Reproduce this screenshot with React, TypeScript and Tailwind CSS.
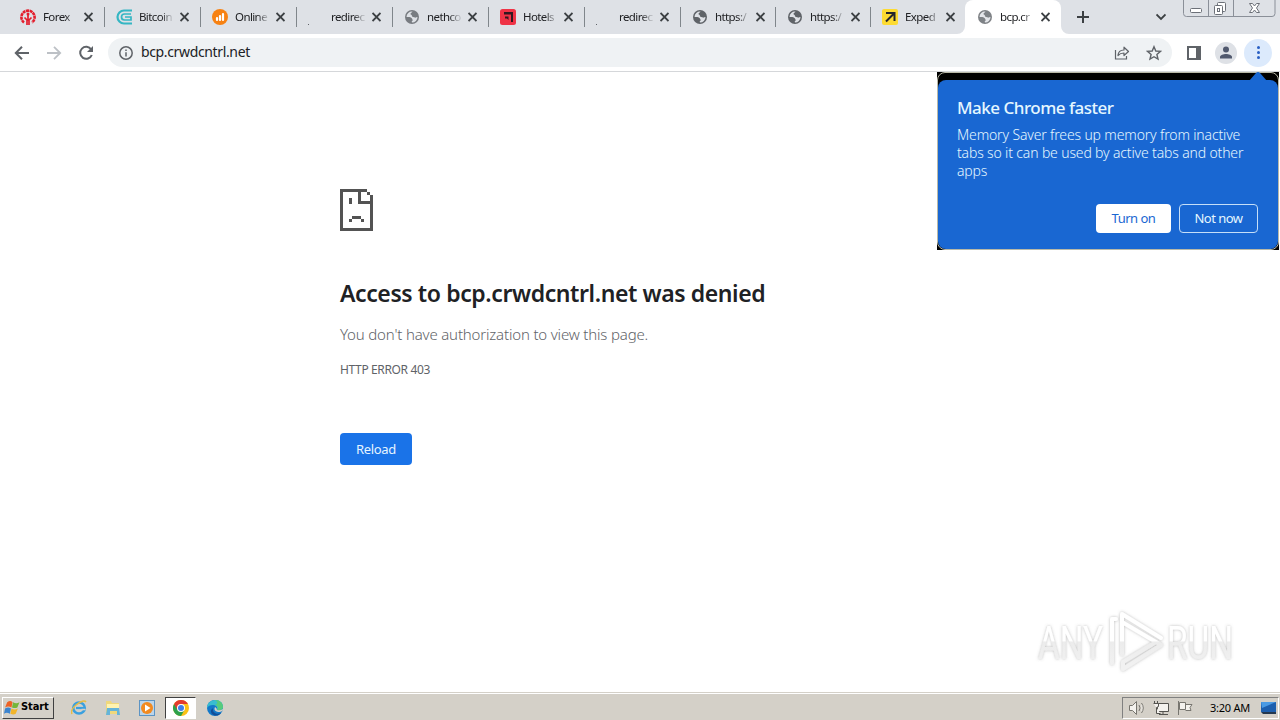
import type { ReactNode } from "react";

type IconName = "forex" | "bitcoin" | "online" | "blank" | "globe" | "hotels" | "expedia";

interface TabInfo {
  title: string;
  icon: IconName;
  width: string;
  faded?: boolean;
}

const TABS: TabInfo[] = [
  { title: "Forex", icon: "forex", width: "w-24" },
  { title: "Bitcoin", icon: "bitcoin", width: "w-24" },
  { title: "Online", icon: "online", width: "w-24" },
  { title: "redirec", icon: "blank", width: "w-24" },
  { title: "nethco", icon: "globe", width: "w-24", faded: true },
  { title: "Hotels", icon: "hotels", width: "w-24" },
  { title: "redirec", icon: "blank", width: "w-24" },
  { title: "https:/", icon: "globe", width: "w-[95px]" },
  { title: "https:/", icon: "globe", width: "w-[95px]" },
  { title: "Exped", icon: "expedia", width: "w-[95px]" },
];

export default function App() {
  return (
    <div className="flex h-[720px] w-[1280px] flex-col overflow-hidden bg-white font-['Noto_Sans','Open_Sans',sans-serif] text-[#202124]">
      <TabStrip />
      <Toolbar />
      <div className="relative min-h-0 flex-1">
        <ErrorPage />
        <MemorySaver />
        <Watermark />
      </div>
      <Taskbar />
    </div>
  );
}

/* ── Tab strip ───────────────────────────────────────────── */

function TabStrip() {
  return (
    <div className="relative flex h-[34px] shrink-0 bg-[#dee1e6] pl-2">
      {TABS.map((tab, i) => (
        <div key={i} className={`relative flex h-[34px] shrink-0 items-center pl-3 ${tab.width}`}>
          <TabBody title={tab.title} icon={tab.icon} faded={tab.faded} />
          {i < TABS.length - 1 && <span className="absolute top-[7px] right-[-1px] h-5 w-px bg-[#80868b]" />}
        </div>
      ))}
      <div className="relative flex h-[34px] w-24 shrink-0 items-center rounded-t-lg bg-white pl-3">
        <TabBody title="bcp.cr" icon="globe" faded />
        <svg className="absolute bottom-0 -left-2" width="8" height="8"><path d="M8 0v8H0a8 8 0 0 0 8-8z" fill="#fff" /></svg>
        <svg className="absolute -right-2 bottom-0" width="8" height="8"><path d="M0 0v8h8a8 8 0 0 1-8-8z" fill="#fff" /></svg>
      </div>
      <svg className="mt-[10px] ml-[15px]" width="14" height="14" viewBox="0 0 14 14" stroke="#3c4043" strokeWidth="2">
        <path d="M7 1v12M1 7h12" />
      </svg>
      <svg className="mt-[13px] ml-[66px]" width="10" height="8" viewBox="0 0 10 8" fill="none" stroke="#3c4043" strokeWidth="1.8">
        <path d="M.5 1.500 5 6l4.500-4.500" />
      </svg>
      <CaptionButtons />
    </div>
  );
}

function TabBody({ title, icon, faded }: { title: string; icon: IconName; faded?: boolean }) {
  return (
    <>
      <Favicon name={icon} faded={faded} />
      <span className="ml-[7px] w-[34px] [mask-image:linear-gradient(to_right,#000_65%,#0003_95%)] text-[11.5px] leading-4 tracking-[-0.6px] whitespace-nowrap">
        {title}
      </span>
      <svg className="ml-[7px]" width="9" height="10" viewBox="0 0 9 10" stroke="#3c4043" strokeWidth="1.900">
        <path d="m.5 1 8 8M8.500 1l-8 8" />
      </svg>
    </>
  );
}

function CaptionButtons() {
  return (
    <svg className="absolute top-0 left-[1183px]" width="93" height="17" viewBox="0 0 93 17" fill="none" stroke="#6c7078">
      <path d="M.5 0v13.500q0 3 3 3h85.500q3 0 3-3V0M25.500 0v16M50.500 0v16" stroke="#8a8f98" />
      <rect x="7.500" y="8.500" width="11" height="4" rx="1" fill="#fff" />
      <rect x="34.500" y="2.500" width="8" height="9" rx="1" fill="#fff" />
      <rect x="31.500" y="5.500" width="8" height="9" rx="1" fill="#fff" />
      <rect x="34.500" y="8.500" width="2" height="3" />
      <path d="M66.500 3.500h3l2 2.500 2-2.500h3l-3 4.500 3 4.500h-3l-2-2.500-2 2.500h-3l3-4.500z" fill="#fff" />
    </svg>
  );
}

function Favicon({ name, faded }: { name: IconName; faded?: boolean }) {
  if (name === "forex") {
    return (
      <svg width="16" height="16" viewBox="0 0 16 16" fill="none" stroke="#e31e2d">
        <path d="M4 13.500A6.600 6.600 0 1 1 12 13.500" strokeWidth="2.600" strokeDasharray="3 .5" />
        <path d="M7 16v-5L4.500 8.500M9 16v-5l2.500-2.500M8 12V6" strokeWidth="1.700" />
        <circle cx="8" cy="5" r="1.500" fill="#e31e2d" stroke="none" />
      </svg>
    );
  }
  if (name === "bitcoin") {
    return (
      <svg width="16" height="16" viewBox="0 0 16 16" fill="none" stroke="#35b6c3">
        <path d="M16 1.500H8a6.500 6.500 0 0 0 0 13h8" strokeWidth="2.200" />
        <path d="M15 5H8.500a3 3 0 0 0 0 6H15V8H9" strokeWidth="1.700" />
      </svg>
    );
  }
  if (name === "online") {
    return (
      <svg width="16" height="16" viewBox="0 0 16 16">
        <circle cx="8" cy="8" r="8" fill="#f78213" />
        <path d="M5 9v2M8 7v4M11 5v6" stroke="#fff" strokeWidth="2.200" strokeLinecap="round" />
      </svg>
    );
  }
  if (name === "hotels") {
    return (
      <svg width="16" height="16" viewBox="0 0 16 16">
        <rect width="16" height="16" rx="2.500" fill="#ef3346" />
        <path d="M4 3h9v10h-2V5.500H4zM5 7.500h3.500V11L7 9.500H5z" fill="#321820" />
      </svg>
    );
  }
  if (name === "expedia") {
    return (
      <svg width="16" height="16" viewBox="0 0 16 16">
        <rect width="16" height="16" rx="2" fill="#fddb32" />
        <path d="M4 4h8.500v8M12 4.500l-8 8" fill="none" stroke="#26262c" strokeWidth="2" />
      </svg>
    );
  }
  if (name === "globe") {
    return (
      <svg width="16" height="16" viewBox="0 0 16 16" className={faded ? "opacity-80" : ""}>
        <circle cx="8" cy="8" r="7" fill="#5f6368" />
        <path d="M8.500 2.500c-.5 1.500-2 1-2 2.500 0 1 1.500.5 1.500 2 0 1.200 2 .8 3 1.500.8.500 1.500-.5 2.500-.5a5.500 5.500 0 0 1-5.500 5.500c-.5-1-.2-1.500.7-2C8.500 9.500 7.500 8.500 5.500 8H2.500a5.500 5.500 0 0 1 6-5.500z" fill="#dee1e6" />
      </svg>
    );
  }
  return (
    <svg width="16" height="16" viewBox="0 0 16 16">
      <rect x="0" y="15" width="1" height="1" fill="#5f6368" />
    </svg>
  );
}

/* ── Toolbar ─────────────────────────────────────────────── */

function Toolbar() {
  return (
    <div className="flex h-[38px] shrink-0 items-center border-b border-[#d5d7da] bg-white pl-[14px]">
      <svg width="16" height="16" viewBox="0 0 16 16" fill="none" stroke="#5f6368" strokeWidth="2">
        <path d="M15 8H2.500M8 1.800 1.800 8 8 14.200" />
      </svg>
      <svg className="ml-4" width="16" height="16" viewBox="0 0 16 16" fill="none" stroke="#bdc1c6" strokeWidth="1.800">
        <path d="M1 8h12.500M8 1.800 14.200 8 8 14.200" />
      </svg>
      <svg className="ml-4" width="16" height="16" viewBox="0 0 16 16" fill="none" stroke="#5f6368" strokeWidth="2">
        <path d="M13.200 4.500a6 6 0 1 0 .6 5.500" />
        <path d="M15 1v6H9z" fill="#5f6368" stroke="none" />
      </svg>
      <div className="ml-[14px] flex h-[29px] w-[1064px] items-center rounded-full bg-[#eff2f4] pl-[11px]">
        <svg width="14" height="14" viewBox="0 0 14 14" fill="none" stroke="#5f6368" strokeWidth="1.500">
          <circle cx="7" cy="7" r="6.200" />
          <path d="M7 6.200v4.300M7 3.500v1.600" />
        </svg>
        <span className="ml-2 pb-px text-[14px] leading-5 tracking-[-0.360px]">bcp.crwdcntrl.net</span>
        <svg className="mr-4 ml-auto" width="16" height="16" viewBox="0 0 16 16" fill="none" stroke="#5f6368" strokeWidth="1.200">
          <path d="M1.500 5v9h11v-3" />
          <path d="M4 10.500C4.200 7 6 5 10 5V2.200L14.500 6.500 10 10.500V8C7 8 5.500 8.700 4 10.500z" strokeLinejoin="round" />
        </svg>
        <svg className="mr-[10px]" width="16" height="16" viewBox="0 0 16 16" fill="none" stroke="#5f6368" strokeWidth="1.400">
          <path d="m8 1.700 1.800 4.300 4.700.4-3.600 3.100 1.100 4.600L8 11.700l-4 2.400 1.100-4.600-3.600-3.100L6.200 6z" />
        </svg>
      </div>
      <svg className="ml-[15px]" width="14" height="14" viewBox="0 0 14 14">
        <path d="M0 0h14v14H0zM2 2v10h7V2z" fill="#5f6368" fillRule="evenodd" />
      </svg>
      <svg className="ml-[14px]" width="22" height="22" viewBox="0 0 22 22">
        <circle cx="11" cy="11" r="11" fill="#dee1e6" />
        <circle cx="11" cy="7.500" r="3" fill="#51596e" />
        <path d="M5 16.500v-1.500c0-2 3.500-3 6-3s6 1 6 3v1.500z" fill="#51596e" />
      </svg>
      <div className="ml-[7px] flex size-7 flex-col items-center justify-center gap-[2px] rounded-full bg-[#dceafc]">
        <i className="size-[3px] rounded-full bg-[#285fc4]" />
        <i className="size-[3px] rounded-full bg-[#285fc4]" />
        <i className="size-[3px] rounded-full bg-[#285fc4]" />
      </div>
    </div>
  );
}

/* ── Page ────────────────────────────────────────────────── */

function ErrorPage() {
  return (
    <main className="flex flex-col items-start pt-[117px] pl-[340px]">
      <svg width="33" height="42" viewBox="0 0 11 14" fill="#535353" shapeRendering="crispEdges">
        <path d="M0 0h9v1H7v3h3V2h1v12H0zM1 1v12h9V5H6V1z" fillRule="evenodd" />
        <path d="M9 1h1v1H9zM3 3h1v2H3zM4 9h3v1H4zM3 10h1v1H3zM7 10h1v1H7z" />
      </svg>
      <h1 className="mt-[48px] text-[23px] leading-[29px] font-semibold tracking-[-0.400px] whitespace-nowrap">
        Access to bcp.crwdcntrl.net was denied
      </h1>
      <p className="mt-[14px] text-[15px] leading-6 font-light tracking-[-0.170px] text-[#5f6368] whitespace-nowrap">
        You don't have authorization to view this page.
      </p>
      <p className="mt-[15px] text-[12px] leading-[18px] tracking-[-0.360px] text-[#5f6368] whitespace-nowrap">HTTP ERROR 403</p>
      <button className="mt-[54px] h-8 w-[72px] rounded bg-[#1a73e8] pt-px text-[13px] tracking-[-0.300px] text-[#e6f3ff]">Reload</button>
    </main>
  );
}

function MemorySaver() {
  return (
    <div className="absolute top-0 left-[937px] h-[178px] w-[342px] bg-black">
      <div className="h-full rounded-lg border border-[#b9b9a8] pt-[7px]">
        <div className="flex h-full flex-col rounded-lg bg-[#1967d2] pt-[17px] pr-5 pb-4 pl-[19px] text-[#e5f7ff]">
          <h2 className="text-[17px] leading-[22px] font-medium tracking-[-0.500px] whitespace-nowrap">Make Chrome faster</h2>
          <p className="mt-[7px] text-[14px] leading-[18px] font-light tracking-[-0.150px] whitespace-nowrap">
            Memory Saver frees up memory from inactive
            <br />
            tabs so it can be used by active tabs and other
            <br />
            apps
          </p>
          <div className="mt-auto flex justify-end gap-2 text-[13px] tracking-[-0.500px]">
            <button className="h-[29px] w-[75px] rounded bg-white text-[#1967d2]">Turn on</button>
            <button className="h-[29px] w-[79px] rounded border border-[#c6dff8]">Not now</button>
          </div>
        </div>
      </div>
      <svg className="absolute top-0 left-[312px]" width="18" height="9"><path d="M0 9 7 1q2-2 4 0l7 8z" fill="#1967d2" /></svg>
    </div>
  );
}

function Watermark() {
  return (
    <svg className="absolute top-[530px] left-[1030px] font-[Roboto,sans-serif] text-[47px]" width="220" height="78" viewBox="0 0 220 78">
      <defs>
        <linearGradient id="fade" x1="0" y1="16" x2="0" y2="62" gradientUnits="userSpaceOnUse">
          <stop offset=".5" stopColor="#fff" />
          <stop offset=".52" stopColor="#ececec" />
          <stop offset="1" stopColor="#f1f1f1" />
        </linearGradient>
        <filter id="glow" x="-10%" y="-20%" width="120%" height="140%">
          <feDropShadow dx="0" dy="0" stdDeviation="1.500" floodColor="#777" floodOpacity=".5" />
        </filter>
      </defs>
      <g filter="url(#glow)" fill="url(#fade)">
        <text x="8" y="57" textLength="65" lengthAdjust="spacingAndGlyphs">ANY</text>
        <text x="137" y="57" textLength="66" lengthAdjust="spacingAndGlyphs">RUN</text>
      </g>
      <g filter="url(#glow)" fill="none" stroke="url(#fade)" strokeWidth="4" strokeLinejoin="round" strokeLinecap="round">
        <path d="M92 52V12l39 24" />
        <path d="M86 17h-4v44M92 20l39 23-38 24V60l33-20" />
      </g>
    </svg>
  );
}

/* ── Taskbar ─────────────────────────────────────────────── */

function Taskbar() {
  return (
    <div className="flex h-[28px] shrink-0 items-center border-t border-[#d4d0c8] bg-[#d4d0c8] pl-[2px] shadow-[inset_0_1px_0_#fff]">
      <button className="mt-[2px] flex h-[22px] w-[52px] items-center border border-t-white border-r-[#404040] border-b-[#404040] border-l-white pl-px font-[Tahoma,'DejaVu_Sans_Condensed','DejaVu_Sans',sans-serif] text-[11px] font-bold tracking-[-0.100px] text-black">
        <svg className="mr-px shrink-0" width="16" height="16" viewBox="0 0 15 15">
          <path d="M3 2q3-2 5 0L7 7Q4 5 1 7z" fill="#ed6226" />
          <path d="M8.500 2q3 2 6 0l-2 5q-2 1-5 0z" fill="#75b63a" />
          <path d="M1 8q3-2 5.500 0l-1 5q-3-2-5.500 0z" fill="#3b84cf" />
          <path d="M7 8q3 2 6 0l-2 5q-2 1-5 0z" fill="#f2b52a" />
        </svg>
        Start
      </button>
      <TaskIcon className="ml-[8px]">
        <ellipse cx="8" cy="8" rx="5.800" ry="5.500" fill="none" stroke="#3aa0df" strokeWidth="2.600" />
        <path d="M5 8h9" stroke="#3aa0df" strokeWidth="2.200" />
        <path d="M10.500 9.500h4" stroke="#d4d0c8" strokeWidth="1.500" />
        <path d="M1 14Q-1 10 5 5q8-6 10-3" fill="none" stroke="#e8bd45" strokeWidth="1.500" />
      </TaskIcon>
      <TaskIcon>
        <path d="M1 1h5l1 2h7v11H1z" fill="#efd87c" />
        <path d="M2 4h12v4H2z" fill="#fff3b0" />
        <path d="M2 8h12l1 7h-3v-4H5v4H1z" fill="#65b4d9" />
      </TaskIcon>
      <TaskIcon>
        <rect x=".5" y=".5" width="15" height="15" fill="#bcd5ea" stroke="#5c94c4" />
        <circle cx="8" cy="8" r="6" fill="#f28a20" />
        <path d="m6 4.500 5.500 3.500L6 11.500z" fill="#fff" />
      </TaskIcon>
      <div className="mt-[2px] ml-px flex h-[22px] w-[31px] items-center justify-center border border-t-[#404040] border-r-white border-b-white border-l-[#404040] bg-white">
        <svg width="16" height="16" viewBox="0 0 16 16">
          <circle cx="8" cy="8" r="8" fill="#fbc116" />
          <path d="M8 8 1.070 4A8 8 0 0 0 8 16l3.500-6z" fill="#2da14c" />
          <path d="M8 4h6.930A8 8 0 0 0 1.070 4L4.500 10z" fill="#e33b2e" />
          <circle cx="8" cy="8" r="4" fill="#fff" />
          <circle cx="8" cy="8" r="3" fill="#3f7fe8" />
        </svg>
      </div>
      <TaskIcon className="ml-[2px]">
        <circle cx="8" cy="8" r="8" fill="#1379c9" />
        <path d="M0 8C0-2 16-3 16 7c0 3-4 4-6 3 1-3-1-5-4-5S1 6 0 8z" fill="#38bdd0" />
        <path d="M8 0c6 0 8 4 8 7s-4 4-6 3c2-2 0-5-2-5 3-1 3-3 0-5z" fill="#58cb7c" />
        <path d="M6 8c-1 5 4 7 8 5-4 5-11 2-10-3z" fill="#134e98" />
        <path d="M8 7q-2 4 3 5 4 0 5-2V9q-3 2-6 1 0-2-2-3z" fill="#d4d0c8" />
      </TaskIcon>
      <div className="mt-[2px] mr-px ml-auto flex h-[22px] w-[157px] items-center border border-t-[#808080] border-r-white border-b-white border-l-[#808080] pl-[6px]">
        <svg width="17" height="16" viewBox="0 0 17 16" fill="#f4f2ee" stroke="#77756f">
          <path d="M.5 5.500h3l4-4v13l-4-4h-3zM10 5q2 3 0 6M12.500 3q3.500 5 0 10" />
        </svg>
        <svg className="ml-[7px]" width="17" height="16" viewBox="0 0 17 16" fill="#f4f2ee" stroke="#54534f">
          <path d="M4.500 3.500h11v8h-11zM6 14.500h9M10 12v2" />
          <path d="M.5 3.500h5v3l-2 1v6h4M1.500 1v2M4.500 1v2" />
        </svg>
        <svg className="ml-[7px]" width="16" height="16" viewBox="0 0 16 16" fill="#f4f2ee" stroke="#77756f">
          <path d="M1.500 1v14M2.500 2.500h6v7h-6zM8.500 4.500H15l-2 3 1 3H8.500" />
        </svg>
        <span className="ml-[17px] font-[Tahoma,'Noto_Sans',sans-serif] text-[11px] leading-4 tracking-[-0.260px] whitespace-nowrap text-black">3:20 AM</span>
        <svg className="mr-px ml-auto shrink-0" width="17" height="16" viewBox="0 0 17 16">
          <path d="M1 2h15v10H1z" fill="#1d5fae" />
          <path d="M1 2h15L2 8z" fill="#4b9be4" />
          <path d="M1 12h15v2H3z" fill="#24384f" />
        </svg>
      </div>
    </div>
  );
}

function TaskIcon({ children, className = "" }: { children: ReactNode; className?: string }) {
  return (
    <div className={`mt-[2px] flex h-[22px] w-[34px] shrink-0 items-center justify-center ${className}`}>
      <svg width="16" height="16" viewBox="0 0 16 16">{children}</svg>
    </div>
  );
}
